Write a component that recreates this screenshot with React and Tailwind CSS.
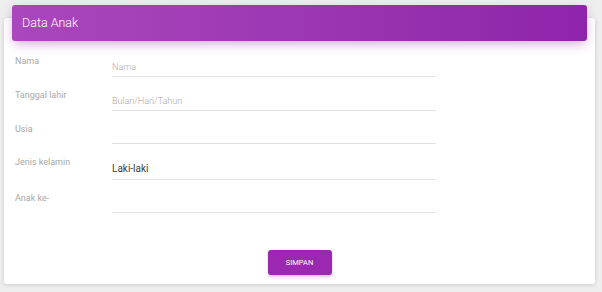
export default function App() {
  const rows = [
    { label: 'Nama', placeholder: 'Nama', h: 'h-[34px]' },
    { label: 'Tanggal lahir', placeholder: 'Bulan/Hari/Tahun', h: 'h-[34px]' },
    { label: 'Usia', placeholder: '', h: 'h-[33px]' },
    { label: 'Jenis kelamin', value: 'Laki-laki', h: 'h-[36px]' },
    { label: 'Anak ke-', placeholder: '', h: 'h-[33px]' },
  ];

  return (
    <div
      className="w-[602px] h-[292px] bg-[#eeeeee] pt-[18px] pl-[4px] pr-[7px] overflow-hidden"
      style={{ fontFamily: 'Roboto, "Liberation Sans", sans-serif' }}
    >
      <div className="bg-white rounded-[3px] h-[266px] shadow-[0_1px_4px_rgba(0,0,0,0.14)] flex flex-col">
        {/* card header */}
        <div className="-mt-[13px] mx-[8px] h-[36px] rounded-[3px] bg-gradient-to-r from-[#ab47bc] to-[#8e24aa] shadow-[0_4px_12px_-2px_rgba(156,39,176,0.45)] flex items-center px-[10px]">
          <span className="text-white text-[12.5px] font-light">Data Anak</span>
        </div>

        {/* form rows */}
        <div className="flex flex-col pl-[11px] mt-[2px]">
          {rows.map((r) => (
            <div key={r.label} className={`flex ${r.h}`}>
              <div className="w-[97px] pt-[12px] text-[9px] text-[#a8a8a8]">{r.label}</div>
              <div className="w-[324px] border-b border-[#e0e0e0] pt-[20px]">
                {r.value ? (
                  <span className="text-[10px] text-[#3c3c3c] leading-none block">{r.value}</span>
                ) : (
                  <span className="text-[9px] text-[#aaaaaa] font-light leading-none block">{r.placeholder || '\u00a0'}</span>
                )}
              </div>
            </div>
          ))}
        </div>

        {/* submit */}
        <div className="flex justify-center mt-auto pb-[9px]">
          <button className="w-[64px] h-[25px] rounded-[3px] bg-[#9c27b0] text-white text-[7.5px] shadow-[0_2px_3px_rgba(156,39,176,0.3)]">
            SIMPAN
          </button>
        </div>
      </div>
    </div>
  );
}
